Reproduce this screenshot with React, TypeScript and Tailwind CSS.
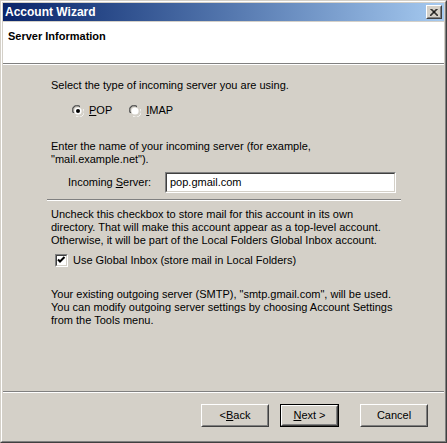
import React from "react";

function Radio({ checked }: { checked?: boolean }) {
  return (
    <svg width="12" height="12" viewBox="0 0 12 12" className="shrink-0">
      {/* classic sunken radio */}
      <path d="M1 8 A5 5 0 0 1 8 1" fill="none" stroke="#808080" strokeWidth="1" />
      <path d="M2 8 A4 4 0 0 1 8 2" fill="none" stroke="#404040" strokeWidth="1" />
      <path d="M4 11 A5 5 0 0 0 11 4" fill="none" stroke="#ffffff" strokeWidth="1" />
      <path d="M4 10 A4 4 0 0 0 10 4" fill="none" stroke="#d4d0c8" strokeWidth="1" />
      <circle cx="6" cy="6" r="3.6" fill="#ffffff" />
      {checked && <circle cx="6" cy="6" r="2" fill="#000000" />}
    </svg>
  );
}

function Checkbox() {
  return (
    <div className="w-[13px] h-[13px] shrink-0 border border-t-[#808080] border-l-[#808080] border-r-white border-b-white">
      <div className="w-full h-full bg-white border border-t-[#404040] border-l-[#404040] border-r-[#d4d0c8] border-b-[#d4d0c8]">
        <svg width="9" height="9" viewBox="0 0 9 9">
          <path d="M1 3.5 L3 5.5 L7.5 1" fill="none" stroke="#000" strokeWidth="2" />
        </svg>
      </div>
    </div>
  );
}

function Button({ children, primary }: { children: React.ReactNode; primary?: boolean }) {
  const face = (
    <div className="h-full border border-t-white border-l-white border-r-[#404040] border-b-[#404040]">
      <div className="h-full flex items-center justify-center border border-t-[#d4d0c8] border-l-[#d4d0c8] border-r-[#808080] border-b-[#808080] text-[11px] text-black">
        {children}
      </div>
    </div>
  );
  if (primary) {
    return <div className="w-[59px] h-[23px] border border-black">{face}</div>;
  }
  return <div className="w-[68px] h-[23px]">{face}</div>;
}

export default function App() {
  return (
    <div className="w-[447px] h-[443px] bg-[#d4d0c8] font-['Liberation_Sans',Arial,sans-serif] text-[11px] leading-[13px] text-black">
      <div className="h-full border border-t-[#d4d0c8] border-l-[#d4d0c8] border-r-[#404040] border-b-[#404040]">
        <div className="h-full border border-t-white border-l-white border-r-[#808080] border-b-[#808080] p-px flex flex-col">
          {/* title bar */}
          <div className="h-[18px] shrink-0 flex items-center justify-between pl-[2px] pr-[2px] bg-gradient-to-r from-[#0a246a] to-[#a6caf0]">
            <span className="text-white font-bold text-[12px]">Account Wizard</span>
            <div className="w-[16px] h-[14px] border border-t-white border-l-white border-r-[#404040] border-b-[#404040] bg-[#d4d0c8]">
              <div className="h-full flex items-center justify-center border border-t-[#d4d0c8] border-l-[#d4d0c8] border-r-[#808080] border-b-[#808080]">
                <svg width="8" height="7" viewBox="0 0 8 7">
                  <path d="M0.5 0 L7.5 7 M1.5 0 L8.5 7 M7.5 0 L0.5 7 M6.5 0 L-0.5 7" stroke="#000" strokeWidth="1" />
                </svg>
              </div>
            </div>
          </div>

          {/* header */}
          <div className="h-[41px] shrink-0 bg-white pl-[5px] pt-[8px] mt-px">
            <span className="font-bold">Server Information</span>
          </div>
          <div className="h-px shrink-0 bg-[#808080]" />
          <div className="h-px shrink-0 bg-white" />

          {/* body */}
          <div className="flex-1 pl-[44px]">
            <div className="w-[354px] pt-[14px] px-[4px]">
              <p>Select the type of incoming server you are using.</p>
              <div className="flex items-center gap-[5px] mt-[12px] ml-[21px] h-[13px]">
                <Radio checked />
                <span>
                  <u>P</u>OP
                </span>
                <div className="w-[7px]" />
                <Radio />
                <span>
                  <u>I</u>MAP
                </span>
              </div>
              <p className="mt-[23px]">
                Enter the name of your incoming server (for example,
                <br />
                "mail.example.net").
              </p>
              <div className="flex items-center mt-[6px]">
                <span className="w-[114px] shrink-0 pl-[17px] whitespace-nowrap">
                  Incoming <u>S</u>erver:
                </span>
                <div className="w-[231px] h-[21px] border border-t-[#808080] border-l-[#808080] border-r-white border-b-white">
                  <div className="h-full bg-white border border-t-[#404040] border-l-[#404040] border-r-[#d4d0c8] border-b-[#d4d0c8] flex items-center pl-[3px]">
                    pop.gmail.com
                  </div>
                </div>
              </div>
            </div>
            <div className="w-[354px] mt-[6px]">
              <div className="h-px bg-[#808080]" />
              <div className="h-px bg-white" />
            </div>
            <div className="w-[354px] px-[4px] pt-[7px]">
              <p>
                Uncheck this checkbox to store mail for this account in its own
                <br />
                directory. That will make this account appear as a top-level account.
                <br />
                Otherwise, it will be part of the Local Folders Global Inbox account.
              </p>
              <div className="flex items-center gap-[5px] mt-[7px] ml-[4px]">
                <Checkbox />
                <span>Use Global Inbox (store mail in Local Folders)</span>
              </div>
              <p className="mt-[21px]">
                Your existing outgoing server (SMTP), "smtp.gmail.com", will be used.
                <br />
                You can modify outgoing server settings by choosing Account Settings
                <br />
                from the Tools menu.
              </p>
            </div>
          </div>

          <div className="h-px shrink-0 bg-[#808080]" />
          <div className="h-px shrink-0 bg-white" />

          {/* buttons */}
          <div className="h-[47px] shrink-0 flex items-start pt-[11px] pl-[198px]">
            <Button>
              &lt; <u>B</u>ack
            </Button>
            <div className="w-[11px]" />
            <Button primary>
              <u>N</u>ext &gt;
            </Button>
            <div className="w-[21px]" />
            <Button>Cancel</Button>
          </div>
        </div>
      </div>
    </div>
  );
}
